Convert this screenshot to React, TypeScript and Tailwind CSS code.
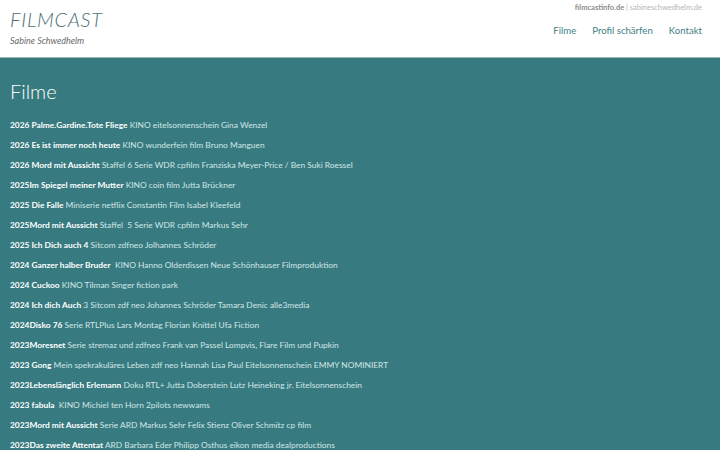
import React from 'react'

const films: [string, string][] = [
  ['2026 Palme.Gardine.Tote Fliege', ' KINO eitelsonnenschein Gina Wenzel'],
  ['2026 Es ist immer noch heute', ' KINO wunderfein film Bruno Manguen'],
  ['2026 Mord mit Aussicht', ' Staffel 6 Serie WDR cpfilm Franziska Meyer-Price / Ben Suki Roessel'],
  ['2025Im Spiegel meiner Mutter', ' KINO coin film Jutta Brückner'],
  ['2025 Die Falle', ' Miniserie netflix Constantin Film Isabel Kleefeld'],
  ['2025Mord mit Aussicht', ' Staffel  5 Serie WDR cpfilm Markus Sehr'],
  ['2025 Ich Dich auch 4', ' Sitcom zdfneo Jolhannes Schröder'],
  ['2024 Ganzer halber Bruder', '  KINO Hanno Olderdissen Neue Schönhauser Filmproduktion'],
  ['2024 Cuckoo', ' KINO Tilman Singer fiction park'],
  ['2024 Ich dich Auch', ' 3 Sitcom zdf neo Johannes Schröder Tamara Denic alle3media'],
  ['2024Disko 76', ' Serie RTLPlus Lars Montag Florian Knittel Ufa Fiction'],
  ['2023Moresnet', ' Serie stremaz und zdfneo Frank van Passel Lompvis, Flare Film und Pupkin'],
  ['2023 Gong', ' Mein spekrakuläres Leben zdf neo Hannah Lisa Paul Eitelsonnenschein EMMY NOMINIERT'],
  ['2023Lebenslänglich Erlemann', ' Doku RTL+ Jutta Doberstein Lutz Heineking jr. Eitelsonnenschein'],
  ['2023 fabula', '  KINO Michiel ten Horn 2pilots newwams'],
  ['2023Mord mit Aussicht', ' Serie ARD Markus Sehr Felix Stienz Oliver Schmitz cp film'],
  ['2023Das zweite Attentat', ' ARD Barbara Eder Philipp Osthus eikon media dealproductions'],
]

const App = () => {
  return (
    <div className="min-h-screen bg-[#377b80] font-['Lato',sans-serif]">
      <header className="flex h-[58px] justify-between border-b border-[#9fb9bb] bg-white pl-[10px] pr-[18px]">
        <div className="flex flex-col">
          <h1 className="mt-[7px] text-[20px] font-light italic leading-[24px] tracking-[0.7px] text-[#4b6f73]">FILMCAST</h1>
          <p className="mt-[5px] text-[9px] italic leading-[10px] text-[#6b6b6b]">Sabine Schwedhelm</p>
        </div>
        <div className="flex flex-col items-end">
          <p className="mt-[3px] text-[7.5px] leading-[9px] text-[#b5b5b5]">
            <span className="font-bold text-[#8c8c8c]">filmcastinfo.de</span> | sabineschwedhelm.de
          </p>
          <nav className="mt-[12px] flex gap-[16px] text-[9.6px] leading-[13px] text-[#3f8185]">
            <a>Filme</a>
            <a>Profil schärfen</a>
            <a>Kontakt</a>
          </nav>
        </div>
      </header>
      <main className="px-[10px] pt-[19px]">
        <h2 className="text-[20px] font-light leading-[28px] text-white">Filme</h2>
        <ul className="mt-[10px]">
          {films.map(([title, info], i) => (
            <li key={i} className="whitespace-pre text-[8.4px] leading-[20px] text-[#d3e6e6]">
              <span className="font-bold text-white">{title}</span>
              {info}
            </li>
          ))}
        </ul>
      </main>
    </div>
  )
}

export default App
